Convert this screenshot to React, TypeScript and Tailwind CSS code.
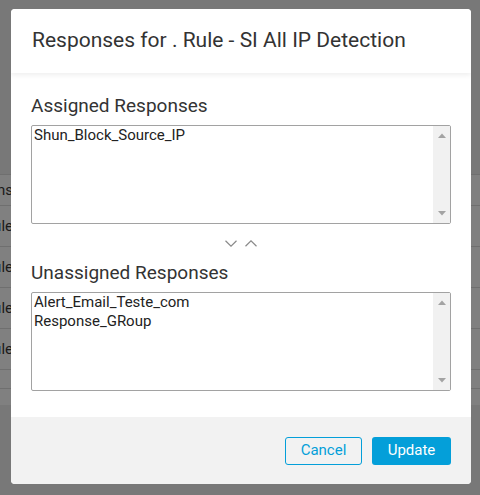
import React from "react";

function ScrollArrow({ up }: { up?: boolean }) {
  return (
    <svg width="8" height="5" viewBox="0 0 8 5">
      {up ? (
        <path d="M0 5 L4 0.5 L8 5 Z" fill="#a3a3a3" />
      ) : (
        <path d="M0 0 L4 4.5 L8 0 Z" fill="#a3a3a3" />
      )}
    </svg>
  );
}

function ListBox({ items }: { items: string[] }) {
  return (
    <div className="flex h-[99px] w-[420px] rounded-[2px] border border-[#a2a2a2] bg-white">
      <div className="flex-1 overflow-hidden">
        {items.map((it) => (
          <div
            key={it}
            className="whitespace-nowrap px-[2px] text-[15px] leading-[19px] text-[#222]"
          >
            {it}
          </div>
        ))}
      </div>
      <div className="flex w-[17px] flex-col items-center justify-between bg-[#f1f1f1] pt-[7px] pb-[7px]">
        <ScrollArrow up />
        <ScrollArrow />
      </div>
    </div>
  );
}

function RowText({ t }: { t: string }) {
  return (
    <div className="flex w-[13px] justify-end overflow-hidden whitespace-nowrap text-[15px] text-[#1a1a1a]">
      {t}
    </div>
  );
}

export default function App() {
  return (
    <div
      className="relative h-[495px] w-[480px] overflow-hidden bg-[#787878]"
      style={{ fontFamily: "Roboto, 'Noto Sans', sans-serif" }}
    >
      {/* background page (dimmed) */}
      <div className="flex flex-col">
        <div className="h-[175px] border-b border-[#6f6f6f] bg-[#787878]" />
        <div className="flex h-[31px] items-center border-b border-[#6f6f6f] bg-[#808080]">
          <RowText t="Actions" />
        </div>
        <div className="flex h-[41px] items-center border-b border-[#6f6f6f] bg-[#808080]">
          <RowText t="Rule" />
        </div>
        <div className="flex h-[41px] items-center border-b border-[#6f6f6f] bg-[#808080]">
          <RowText t="Rule" />
        </div>
        <div className="flex h-[41px] items-center border-b border-[#6f6f6f] bg-[#808080]">
          <RowText t="Rule" />
        </div>
        <div className="flex h-[41px] items-center border-b border-[#6f6f6f] bg-[#808080]">
          <RowText t="Rule" />
        </div>
        <div className="h-[19px] border-b border-[#6f6f6f] bg-[#808080]" />
        <div className="h-[16px] bg-[#808080]" />
      </div>

      {/* modal */}
      <div className="absolute left-[11px] top-[9px] flex h-[475px] w-[460px] flex-col overflow-hidden rounded-[4px] bg-white">
        <div className="relative z-10 h-[64px] shrink-0 bg-white px-[21px] pt-[19px] shadow-[0_2px_5px_rgba(0,0,0,0.07)]">
          <div className="text-[21px] leading-[24px] text-[#333]">
            Responses for . Rule - SI All IP Detection
          </div>
        </div>

        <div className="flex flex-1 flex-col px-[20px] pt-[22px]">
          <div className="text-[19px] leading-[22px] text-[#333]">Assigned Responses</div>
          <div className="mt-[8px]">
            <ListBox items={["Shun_Block_Source_IP"]} />
          </div>
          <div className="flex h-[38px] items-center justify-center gap-[8px] pt-[1px]">
            <svg width="12" height="7" viewBox="0 0 12 7">
              <path d="M0.5 0.8 L6 6.2 L11.5 0.8" fill="none" stroke="#8a8a8a" strokeWidth="1.2" />
            </svg>
            <svg width="12" height="7" viewBox="0 0 12 7">
              <path d="M0.5 6.2 L6 0.8 L11.5 6.2" fill="none" stroke="#8a8a8a" strokeWidth="1.2" />
            </svg>
          </div>
          <div className="text-[19px] leading-[22px] text-[#333]">Unassigned Responses</div>
          <div className="mt-[8px]">
            <ListBox items={["Alert_Email_Teste_com", "Response_GRoup"]} />
          </div>
        </div>

        <div className="flex h-[67px] shrink-0 items-center justify-end gap-[10px] bg-[#f2f2f2] px-[20px]">
          <button className="h-[28px] w-[77px] rounded-[3px] border border-[#049fd9] text-[15px] text-[#049fd9]">
            Cancel
          </button>
          <button className="h-[28px] w-[79px] rounded-[3px] bg-[#049fd9] text-[15px] text-white">
            Update
          </button>
        </div>
      </div>
    </div>
  );
}
